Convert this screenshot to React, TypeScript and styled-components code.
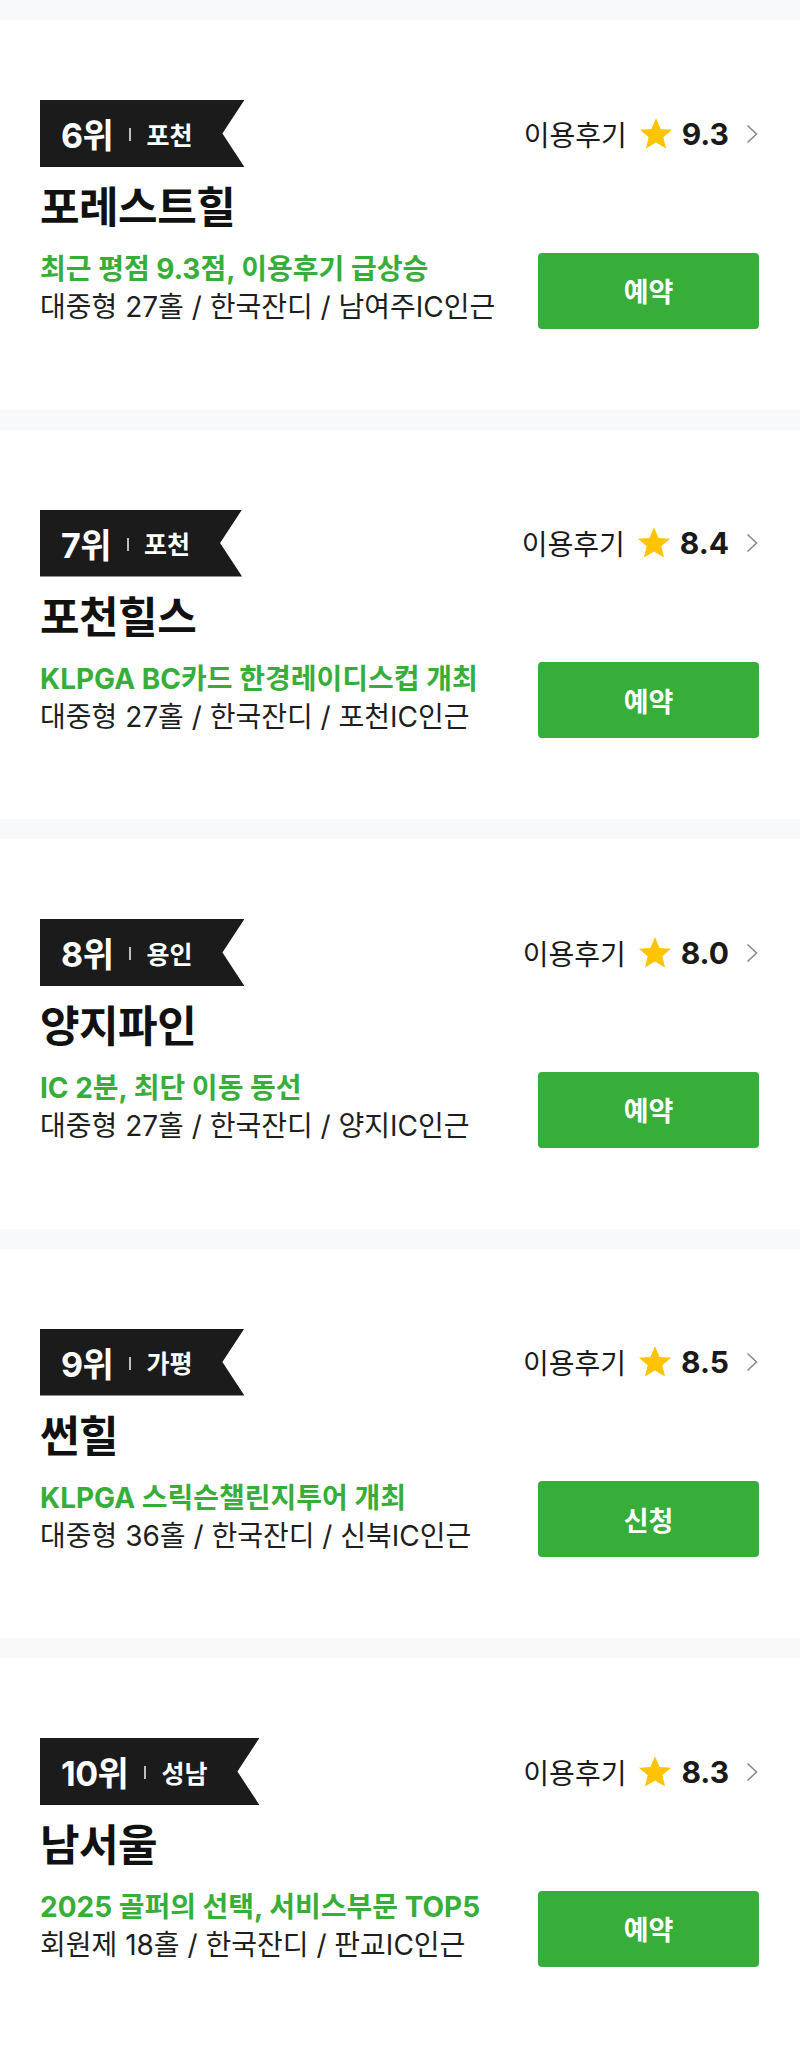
import styled, { createGlobalStyle } from 'styled-components';

const GlobalStyle = createGlobalStyle`
  html, body {
    margin: 0;
    padding: 0;
    background: #ffffff;
  }
  body {
    font-family: "Inter", "Noto Sans CJK KR", sans-serif;
    color: #1a1a1a;
  }
`

type Course = {
  rank: number;
  region: string;
  name: string;
  rating: string;
  highlight: string;
  info: string;
  action: string;
};

const courses: Course[] = [
  { rank: 6, region: '포천', name: '포레스트힐', rating: '9.3', highlight: '최근 평점 9.3점, 이용후기 급상승', info: '대중형 27홀 / 한국잔디 / 남여주IC인근', action: '예약' },
  { rank: 7, region: '포천', name: '포천힐스', rating: '8.4', highlight: 'KLPGA BC카드 한경레이디스컵 개최', info: '대중형 27홀 / 한국잔디 / 포천IC인근', action: '예약' },
  { rank: 8, region: '용인', name: '양지파인', rating: '8.0', highlight: 'IC 2분, 최단 이동 동선', info: '대중형 27홀 / 한국잔디 / 양지IC인근', action: '예약' },
  { rank: 9, region: '가평', name: '썬힐', rating: '8.5', highlight: 'KLPGA 스릭슨챌린지투어 개최', info: '대중형 36홀 / 한국잔디 / 신북IC인근', action: '신청' },
  { rank: 10, region: '성남', name: '남서울', rating: '8.3', highlight: '2025 골퍼의 선택, 서비스부문 TOP5', info: '회원제 18홀 / 한국잔디 / 판교IC인근', action: '예약' },
];

const List = styled.div`
  background: #f8f9fb;
  padding-top: 20px;
  display: flex;
  flex-direction: column;
  gap: 20px;
`

const Card = styled.section`
  background: #ffffff;
  padding: 80px 41px 0 40px;
  height: 389.5px;
  box-sizing: border-box;
`

const TopRow = styled.div`
  display: flex;
  align-items: center;
  justify-content: space-between;
`

const Ribbon = styled.div`
  display: inline-flex;
  align-items: center;
  height: 67px;
  padding: 0 52px 0 21px;
  background: #1b1b1b;
  color: #ffffff;
  clip-path: polygon(0 0, 100% 0, calc(100% - 22px) 50%, 100% 100%, 0 100%);
`

const Rank = styled.span`
  font-size: 34px;
  font-weight: 700;
  letter-spacing: -0.5px;
`

const Divider = styled.span`
  width: 2px;
  height: 13px;
  background: #bdbdbd;
  margin: 2px 15px 0 16px;
`

const Region = styled.span`
  font-size: 25px;
  font-weight: 700;
`

const Review = styled.a`
  display: flex;
  align-items: center;
  color: #1a1a1a;
  text-decoration: none;
`

const ReviewLabel = styled.span`
  font-size: 28px;
  font-weight: 400;
`

const Score = styled.span`
  font-size: 30px;
  font-weight: 700;
  margin-left: 7px;
`

const Star = styled.svg`
  width: 38px;
  height: 36px;
  margin-left: 10px;
`

const Chevron = styled.svg`
  width: 13px;
  height: 20px;
  margin-left: 17px;
`

const Title = styled.h2`
  margin: 14px 0 0;
  font-size: 43px;
  line-height: 52px;
  font-weight: 700;
  color: #111111;
  letter-spacing: -0.5px;
`

const BottomRow = styled.div`
  display: flex;
  align-items: center;
  justify-content: space-between;
  margin-top: 19px;
`

const Texts = styled.div`
  display: flex;
  flex-direction: column;
  gap: 4px;
  margin-bottom: 5px;
`

const Highlight = styled.p`
  margin: 0;
  font-size: 28px;
  line-height: 34px;
  font-weight: 700;
  color: #38ae3a;
`

const Info = styled.p`
  margin: 0;
  font-size: 28px;
  line-height: 34px;
  font-weight: 400;
  color: #1e1e1e;
`

const ActionButton = styled.button`
  width: 221px;
  height: 76px;
  border: none;
  border-radius: 4px;
  background: #38ae3a;
  color: #ffffff;
  font-family: inherit;
  font-size: 27px;
  font-weight: 700;
  cursor: pointer;
`

function CourseCard({ course }: { course: Course }) {
  return (
    <Card>
      <TopRow>
        <Ribbon>
          <Rank>{course.rank}위</Rank>
          <Divider />
          <Region>{course.region}</Region>
        </Ribbon>
        <Review href="#">
          <ReviewLabel>이용후기</ReviewLabel>
          <Star viewBox="0 0 24 24">
            <path d="M12 1.5l3.1 7.1 7.6.6-5.8 5 1.8 7.5L12 17.7l-6.7 4 1.8-7.5-5.8-5 7.6-.6z" fill="#ffc400" />
          </Star>
          <Score>{course.rating}</Score>
          <Chevron viewBox="0 0 13 20">
            <path d="M1.5 1.5l9 8.5-9 8.5" fill="none" stroke="#8a8a8a" strokeWidth="1.6" />
          </Chevron>
        </Review>
      </TopRow>
      <Title>{course.name}</Title>
      <BottomRow>
        <Texts>
          <Highlight>{course.highlight}</Highlight>
          <Info>{course.info}</Info>
        </Texts>
        <ActionButton>{course.action}</ActionButton>
      </BottomRow>
    </Card>
  );
}

export default function App() {
  return (
    <>
      <GlobalStyle />
      <List>
        {courses.map((c) => (
          <CourseCard key={c.rank} course={c} />
        ))}
      </List>
    </>
  );
}
